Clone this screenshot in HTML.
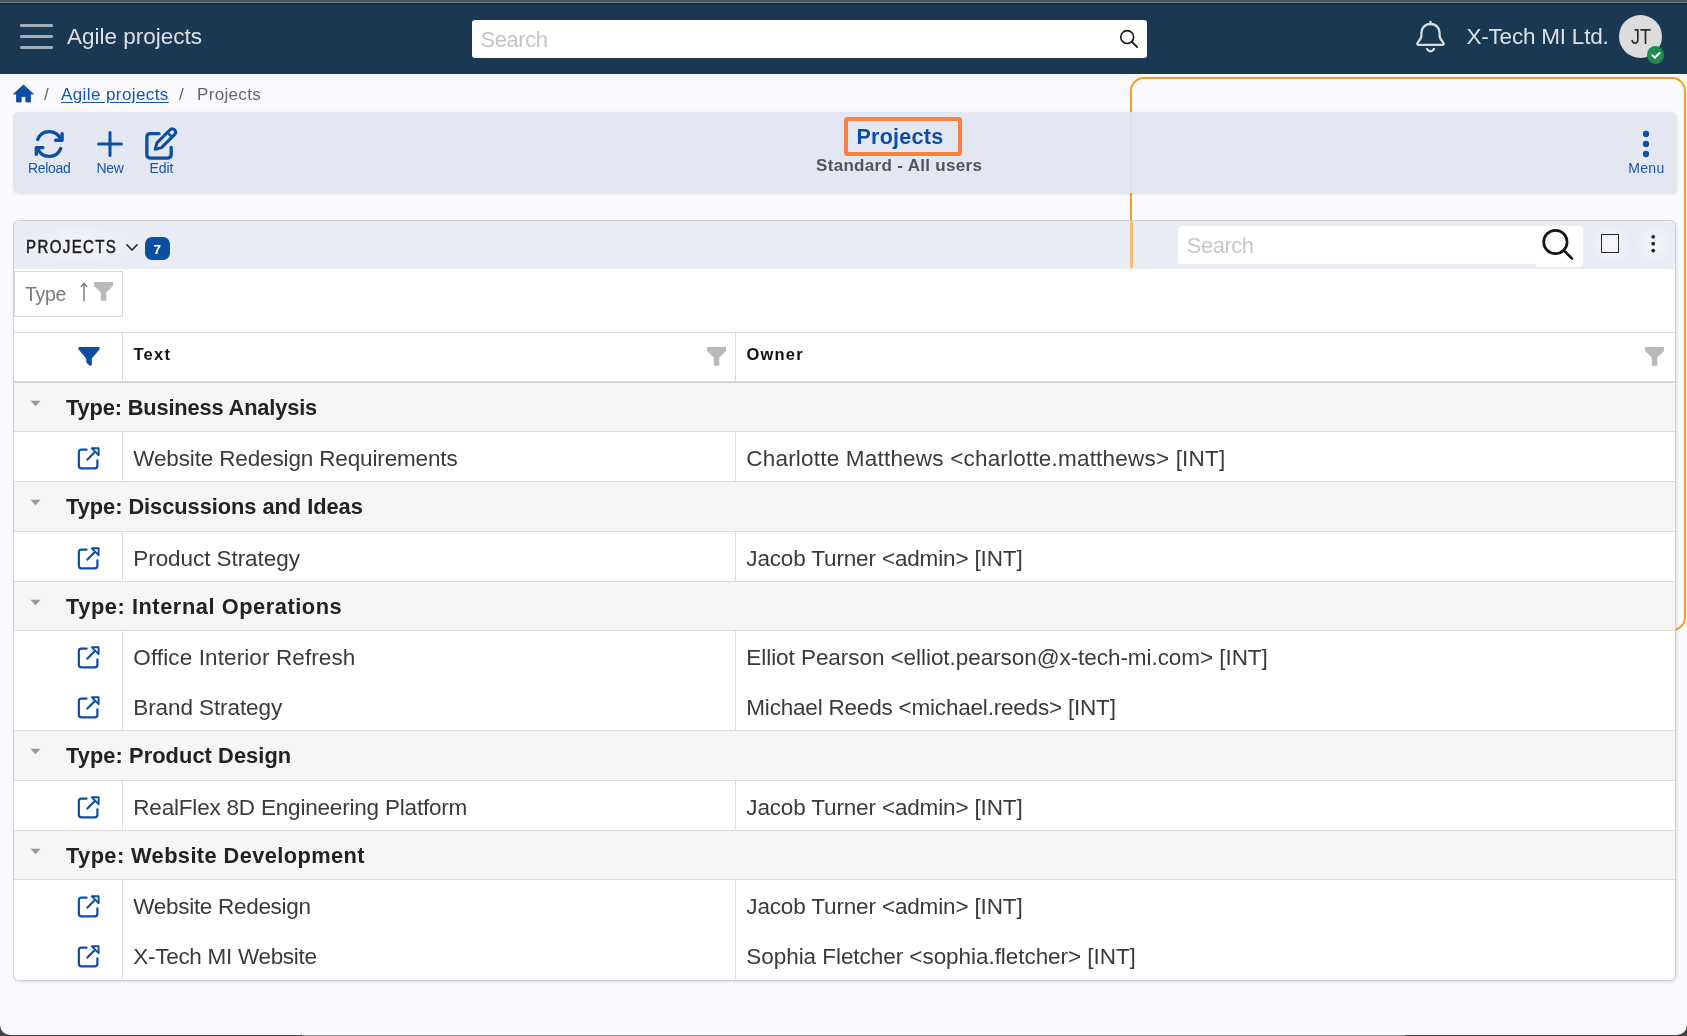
<!DOCTYPE html><html><head><meta charset="utf-8"><style>
html,body{margin:0;padding:0;width:1687px;height:1036px;overflow:hidden;background:#444;}
#w{position:absolute;left:0;top:0;width:1687px;height:1036px;will-change:transform;}
.t{position:absolute;white-space:nowrap;line-height:1;font-family:"Liberation Sans",sans-serif;}
.r{position:absolute;display:block;}
</style></head><body><div id="w">
<div class="r" style="left:0px;top:0px;width:1687px;height:1036px;background:#444;"></div>
<div class="r" style="left:0px;top:0px;width:1687px;height:1036px;background:#f9f9fe;border-radius:0 0 10px 10px;clip-path:inset(0 0 1px 0 round 0 0 10px 10px);"></div>
<div class="r" style="left:0px;top:0px;width:1687px;height:2px;background:#455661;"></div>
<div class="r" style="left:0px;top:2px;width:1687px;height:1px;background:#6f7e86;"></div>
<div class="r" style="left:302px;top:1035px;width:1103px;height:1px;background:#8c8c8c;"></div>
<div class="r" style="left:10px;top:1034px;width:1667px;height:1px;background:#ffffff;"></div>
<div class="r" style="left:0px;top:3px;width:1687px;height:71px;background:#1a3852;"></div>
<div class="r" style="left:0px;top:3px;width:1687px;height:1.5px;background:#16324b;"></div>
<div class="r" style="left:0px;top:74px;width:1687px;height:1px;background:#ffffff;"></div>
<div class="r" style="left:20px;top:24px;width:33px;height:2.6px;background:#a3adb7;border-radius:1.3px;"></div>
<div class="r" style="left:20px;top:35px;width:33px;height:2.6px;background:#a3adb7;border-radius:1.3px;"></div>
<div class="r" style="left:20px;top:46px;width:33px;height:2.6px;background:#a3adb7;border-radius:1.3px;"></div>
<div class="t" style="left:67px;top:26px;font-size:22.5px;color:#dce0e4;font-weight:normal;letter-spacing:0.0px;">Agile projects</div>
<div class="r" style="left:472px;top:20px;width:675px;height:38px;background:#fff;border-radius:3px;"></div>
<div class="t" style="left:480.4px;top:29px;font-size:22px;color:#c4c4c4;font-weight:normal;letter-spacing:-0.42px;">Search</div>
<svg class="r" style="left:1116px;top:27px" width="26" height="24" viewBox="0 0 26 24"><circle cx="11.2" cy="10.06" r="6.45" fill="none" stroke="#111" stroke-width="1.6"/><line x1="15.8" y1="14.6" x2="21.2" y2="20.2" stroke="#111" stroke-width="1.7" stroke-linecap="round"/></svg>
<svg class="r" style="left:1414px;top:18px" width="34" height="36" viewBox="0 0 34 36"><g fill="none" stroke="#d8dcdf" stroke-width="2.3" stroke-linecap="round" stroke-linejoin="round"><path d="M16.5 6 C11 6 7.4 10 7.4 15 L7.4 17.5 C7.4 20.5 6 22 4 24.3 C2.5 26 3.3 26.9 5 26.9 L28 26.9 C29.7 26.9 30.5 26 29 24.3 C27 22 25.6 20.5 25.6 17.5 L25.6 15 C25.6 10 22 6 16.5 6 Z"/><line x1="16.5" y1="3.8" x2="16.5" y2="6"/><path d="M13 31 Q16.5 35.6 20 31"/></g></svg>
<div class="t" style="left:1466.5px;top:26px;font-size:22.5px;color:#dce0e4;font-weight:normal;letter-spacing:-0.215px;">X-Tech MI Ltd.</div>
<div class="r" style="left:1619px;top:15px;width:43px;height:43px;background:#dcdcdc;border-radius:50%;"></div>
<div class="t" style="left:1630.5px;top:26px;font-size:22.5px;color:#2a2a2a;font-weight:normal;letter-spacing:0px;transform:scaleX(0.8);transform-origin:0 0;">JT</div>
<div class="r" style="left:1646.5px;top:46.2px;width:17.6px;height:17.6px;background:#1f8a50;border-radius:50%;"></div>
<svg class="r" style="left:1646.5px;top:46.2px" width="18" height="18" viewBox="0 0 18 18"><path d="M5.4 9.3 L7.9 11.7 L12.5 7" fill="none" stroke="#fff" stroke-width="2" stroke-linecap="round" stroke-linejoin="round"/></svg>
<svg class="r" style="left:13px;top:84px" width="21" height="19" viewBox="0 0 21 19"><path d="M10.5 1 L20.5 10 L17.5 10 L17.5 18 L12.8 18 L12.8 12.5 L8.2 12.5 L8.2 18 L3.5 18 L3.5 10 L0.5 10 Z" fill="#0b4ea6" stroke="#0b4ea6" stroke-width="0.8" stroke-linejoin="round"/></svg>
<div class="t" style="left:44px;top:86px;font-size:17px;color:#666;font-weight:normal;letter-spacing:0px;">/</div>
<div class="t" style="left:61px;top:86px;font-size:17px;color:#1454b4;font-weight:normal;letter-spacing:0.408px;text-decoration:underline;text-underline-offset:2px;">Agile projects</div>
<div class="t" style="left:179px;top:86px;font-size:17px;color:#666;font-weight:normal;letter-spacing:0px;">/</div>
<div class="t" style="left:197px;top:86px;font-size:17px;color:#666;font-weight:normal;letter-spacing:0.329px;">Projects</div>
<div class="r" style="left:1129.5px;top:77px;width:556px;height:553.5px;border:2.8px solid #f4a020;border-radius:14px;box-sizing:border-box;"></div>
<div class="r" style="left:13px;top:112px;width:1663px;height:81px;background:rgba(225,230,240,0.95);border-radius:5px;box-shadow:1px 1px 3px rgba(0,0,0,0.12);"></div>
<div class="r" style="left:13px;top:220px;width:1663px;height:761px;background:#fff;border:1.5px solid #cfcfd4;border-radius:6px;box-sizing:border-box;box-shadow:1px 1px 3px rgba(0,0,0,0.12);"></div>
<div class="r" style="left:14px;top:221px;width:1661px;height:47.5px;background:#e9ecf5;border-radius:5px 5px 0 0;"></div>
<svg class="r" style="left:31px;top:127px" width="36" height="33" viewBox="0 0 36 33"><g fill="none" stroke="#0b4ea6" stroke-width="3.4" stroke-linecap="round" stroke-linejoin="round"><path d="M6.7 12.4 A12.4 12.4 0 0 1 29.6 12.2"/><path d="M24.6 13.3 L31.1 13.3 L31.1 6.6"/><path d="M29.7 21.6 A12.4 12.4 0 0 1 6.8 21.8"/><path d="M11.8 20.6 L5.3 20.6 L5.3 27.3"/></g></svg>
<div class="t" style="left:28px;top:161px;font-size:14px;color:#1a55ad;font-weight:normal;letter-spacing:-0.32px;">Reload</div>
<svg class="r" style="left:94px;top:129px" width="32" height="30" viewBox="0 0 32 30"><g stroke="#0b4ea6" stroke-width="3" stroke-linecap="round"><line x1="16" y1="3.6" x2="16" y2="26.4"/><line x1="4.6" y1="15" x2="27.4" y2="15"/></g></svg>
<div class="t" style="left:96.6px;top:161px;font-size:14px;color:#1a55ad;font-weight:normal;letter-spacing:-0.4px;">New</div>
<svg class="r" style="left:143px;top:126px" width="36" height="36" viewBox="0 0 36 36"><g fill="none" stroke="#0b4ea6" stroke-width="3.3" stroke-linecap="round" stroke-linejoin="round"><path d="M16 7.55 L7.3 7.55 Q3.85 7.55 3.85 11 L3.85 28.6 Q3.85 32.05 7.3 32.05 L24.7 32.05 Q28.15 32.05 28.15 28.6 L28.15 21.5"/><path d="M12.2 23.3 L13.91 16.93 L27.07 3.77 A3.3 3.3 0 0 1 31.73 8.43 L18.57 21.59 Z" stroke-width="3"/><path d="M24.38 6.46 L29.04 11.12" stroke-width="2.6"/></g></svg>
<div class="t" style="left:149.5px;top:161px;font-size:14px;color:#1a55ad;font-weight:normal;letter-spacing:-0.1px;">Edit</div>
<div class="t" style="left:856.5px;top:127px;font-size:21.5px;color:#0d4ca8;font-weight:bold;letter-spacing:0.257px;">Projects</div>
<div class="t" style="left:816px;top:157px;font-size:17px;color:#50555c;font-weight:bold;letter-spacing:0.316px;">Standard - All users</div>
<div class="r" style="left:844px;top:117px;width:118px;height:38.5px;border:4.4px solid #ff7f3f;border-radius:3px;box-sizing:border-box;"></div>
<svg class="r" style="left:1636px;top:126px" width="20" height="34" viewBox="0 0 20 34"><g fill="#0b4ea6"><circle cx="10" cy="8" r="3.15"/><circle cx="10" cy="18" r="3.15"/><circle cx="10" cy="28" r="3.15"/></g></svg>
<div class="t" style="left:1628.2px;top:161px;font-size:14px;color:#1a55ad;font-weight:normal;letter-spacing:0.367px;">Menu</div>
<div class="r" style="left:1129.5px;top:221px;width:3px;height:47px;background:rgba(244,160,32,0.62);"></div>
<div class="r" style="left:14px;top:224px;width:130px;height:44px;background:radial-gradient(closest-side, rgba(255,255,255,0.45), rgba(255,255,255,0));"></div>
<div class="r" style="left:1588px;top:224px;width:44px;height:42px;background:radial-gradient(closest-side, rgba(255,255,255,0.6), rgba(255,255,255,0));"></div>
<div class="r" style="left:1634px;top:224px;width:40px;height:42px;background:radial-gradient(closest-side, rgba(255,255,255,0.5), rgba(255,255,255,0));"></div>
<div class="t" style="left:26.4px;top:239px;font-size:17.5px;color:#1e1e1e;font-weight:normal;letter-spacing:1.6px;transform:scaleX(0.86);transform-origin:0 0;-webkit-text-stroke:0.5px #1e1e1e;">PROJECTS</div>
<svg class="r" style="left:125px;top:243px" width="14" height="9" viewBox="0 0 14 9"><path d="M1.8 1.8 L7 7 L12.2 1.8" fill="none" stroke="#222" stroke-width="1.6" stroke-linecap="round" stroke-linejoin="round"/></svg>
<div class="r" style="left:145px;top:237px;width:25px;height:23px;background:#0b4ea2;border-radius:7px;"></div>
<div class="t" style="left:153.6px;top:243px;font-size:13.5px;color:#fff;font-weight:bold;letter-spacing:0px;">7</div>
<div class="r" style="left:1178px;top:226px;width:405px;height:38px;background:#fff;border-radius:4px;"></div>
<div class="r" style="left:1535px;top:230px;width:48px;height:36.5px;background:#fff;border-radius:0 0 4px 4px;"></div>
<div class="t" style="left:1186.7px;top:235px;font-size:22px;color:#c8c8c8;font-weight:normal;letter-spacing:-0.46px;">Search</div>
<svg class="r" style="left:1538px;top:226px" width="40" height="38" viewBox="0 0 40 38"><circle cx="17.4" cy="16" r="11.7" fill="none" stroke="#151515" stroke-width="2.7"/><line x1="25.8" y1="24.4" x2="34" y2="32.6" stroke="#151515" stroke-width="2.7" stroke-linecap="round"/></svg>
<div class="r" style="left:1600.5px;top:234.3px;width:18.8px;height:18.6px;border:1.8px solid #2a2a2a;box-sizing:border-box;"></div>
<svg class="r" style="left:1645px;top:230px" width="16" height="26" viewBox="0 0 16 26"><g fill="#1e1e1e"><circle cx="8.2" cy="6.8" r="1.85"/><circle cx="8.2" cy="13.7" r="1.85"/><circle cx="8.2" cy="20.6" r="1.85"/></g></svg>
<div class="r" style="left:14px;top:271px;width:109px;height:46px;background:#fff;border:1px solid #d9d9d9;box-sizing:border-box;"></div>
<div class="t" style="left:25px;top:285px;font-size:19.5px;color:#7a7a7a;font-weight:normal;letter-spacing:-0.333px;">Type</div>
<svg class="r" style="left:79px;top:281px" width="10" height="22" viewBox="0 0 10 22"><g stroke="#777" stroke-width="1.4" fill="none" stroke-linecap="round"><line x1="5" y1="2.5" x2="5" y2="20"/><path d="M2.3 5.5 L5 2.3 L7.7 5.5"/></g></svg>
<svg class="r" style="left:93px;top:281px" width="21" height="21" viewBox="0 0 21 21"><path d="M1 1 L20 1 L20 5.1 L13.3 11.5 L13.3 19.8 L7.8 19.8 L7.8 11.5 L1 5.1 Z" fill="#b9b9b9"/></svg>
<div class="r" style="left:14px;top:332px;width:1661px;height:1px;background:#dedede;"></div>
<div class="r" style="left:14px;top:381px;width:1661px;height:2px;background:#d6d6d6;"></div>
<div class="r" style="left:121.5px;top:333px;width:1px;height:48px;background:#dedede;"></div>
<div class="r" style="left:735px;top:333px;width:1px;height:48px;background:#dedede;"></div>
<svg class="r" style="left:77px;top:346px" width="24" height="21" viewBox="0 0 24 21"><path d="M2.8 1 L21.2 1 Q23.6 1.2 22.4 3.4 L14.8 12.4 L14.8 18.6 Q14.6 20.6 12.6 19.4 L10.2 17.4 Q9.2 16.6 9.2 15.5 L9.2 12.4 L1.6 3.4 Q0.4 1.2 2.8 1 Z" fill="#0b4ea6"/></svg>
<div class="t" style="left:133.5px;top:346px;font-size:16.5px;color:#111;font-weight:bold;letter-spacing:1.267px;">Text</div>
<svg class="r" style="left:706px;top:346px" width="21" height="21" viewBox="0 0 21 21"><path d="M1 1 L20 1 L20 5.1 L13.3 11.5 L13.3 19.8 L7.8 19.8 L7.8 11.5 L1 5.1 Z" fill="#b9b9b9"/></svg>
<div class="t" style="left:746.4px;top:346px;font-size:16.5px;color:#111;font-weight:bold;letter-spacing:1.225px;">Owner</div>
<svg class="r" style="left:1644px;top:346px" width="21" height="21" viewBox="0 0 21 21"><path d="M1 1 L20 1 L20 5.1 L13.3 11.5 L13.3 19.8 L7.8 19.8 L7.8 11.5 L1 5.1 Z" fill="#b9b9b9"/></svg>
<div class="r" style="left:14px;top:383px;width:1661px;height:48px;background:#f5f5f5;"></div>
<svg class="r" style="left:29px;top:400px" width="13" height="7" viewBox="0 0 13 7"><path d="M1.4 0.8 L11.6 0.8 L6.5 6.2 Z" fill="#9a9a9a"/></svg>
<div class="t" style="left:66px;top:397px;font-size:21.8px;color:#222;font-weight:bold;letter-spacing:-0.145px;">Type: Business Analysis</div>
<div class="r" style="left:14px;top:431px;width:1661px;height:1px;background:#dcdcdc;"></div>
<div class="r" style="left:121.5px;top:432px;width:1px;height:49px;background:#dedede;"></div>
<div class="r" style="left:735px;top:432px;width:1px;height:49px;background:#dedede;"></div>
<svg class="r" style="left:76.2px;top:446.1px" width="24" height="25" viewBox="0 0 24 25"><g fill="none" stroke="#0b4ea6" stroke-width="2.2" stroke-linecap="round" stroke-linejoin="round"><path d="M10.6 3.6 L5.4 3.6 Q2.86 3.6 2.86 6.1 L2.86 19.8 Q2.86 22.3 5.4 22.3 L18.9 22.3 Q21.4 22.3 21.4 19.8 L21.4 14.3"/><path d="M11.4 13.6 L18.6 6.3"/><path d="M15.9 2.3 L22.6 2.3 L22.6 9.2 Z" stroke-width="1.9"/></g></svg>
<div class="t" style="left:133.3px;top:448px;font-size:22.5px;color:#3a3a3a;font-weight:normal;letter-spacing:-0.146px;">Website Redesign Requirements</div>
<div class="t" style="left:746.3px;top:448px;font-size:22.5px;color:#3a3a3a;font-weight:normal;letter-spacing:0.198px;">Charlotte Matthews &lt;charlotte.matthews&gt; [INT]</div>
<div class="r" style="left:14px;top:481px;width:1661px;height:1px;background:#dcdcdc;"></div>
<div class="r" style="left:14px;top:482px;width:1661px;height:49px;background:#f5f5f5;"></div>
<svg class="r" style="left:29px;top:499px" width="13" height="7" viewBox="0 0 13 7"><path d="M1.4 0.8 L11.6 0.8 L6.5 6.2 Z" fill="#9a9a9a"/></svg>
<div class="t" style="left:66px;top:496px;font-size:21.8px;color:#222;font-weight:bold;letter-spacing:-0.031px;">Type: Discussions and Ideas</div>
<div class="r" style="left:14px;top:531px;width:1661px;height:1px;background:#dcdcdc;"></div>
<div class="r" style="left:121.5px;top:532px;width:1px;height:49px;background:#dedede;"></div>
<div class="r" style="left:735px;top:532px;width:1px;height:49px;background:#dedede;"></div>
<svg class="r" style="left:76.2px;top:546.1px" width="24" height="25" viewBox="0 0 24 25"><g fill="none" stroke="#0b4ea6" stroke-width="2.2" stroke-linecap="round" stroke-linejoin="round"><path d="M10.6 3.6 L5.4 3.6 Q2.86 3.6 2.86 6.1 L2.86 19.8 Q2.86 22.3 5.4 22.3 L18.9 22.3 Q21.4 22.3 21.4 19.8 L21.4 14.3"/><path d="M11.4 13.6 L18.6 6.3"/><path d="M15.9 2.3 L22.6 2.3 L22.6 9.2 Z" stroke-width="1.9"/></g></svg>
<div class="t" style="left:133.3px;top:548px;font-size:22.5px;color:#3a3a3a;font-weight:normal;letter-spacing:-0.067px;">Product Strategy</div>
<div class="t" style="left:746.3px;top:548px;font-size:22.5px;color:#3a3a3a;font-weight:normal;letter-spacing:-0.152px;">Jacob Turner &lt;admin&gt; [INT]</div>
<div class="r" style="left:14px;top:581px;width:1661px;height:1px;background:#dcdcdc;"></div>
<div class="r" style="left:14px;top:582px;width:1661px;height:48px;background:#f5f5f5;"></div>
<svg class="r" style="left:29px;top:599px" width="13" height="7" viewBox="0 0 13 7"><path d="M1.4 0.8 L11.6 0.8 L6.5 6.2 Z" fill="#9a9a9a"/></svg>
<div class="t" style="left:66px;top:596px;font-size:21.8px;color:#222;font-weight:bold;letter-spacing:0.554px;">Type: Internal Operations</div>
<div class="r" style="left:14px;top:630px;width:1661px;height:1px;background:#dcdcdc;"></div>
<div class="r" style="left:121.5px;top:631px;width:1px;height:50px;background:#dedede;"></div>
<div class="r" style="left:735px;top:631px;width:1px;height:50px;background:#dedede;"></div>
<svg class="r" style="left:76.2px;top:645.1px" width="24" height="25" viewBox="0 0 24 25"><g fill="none" stroke="#0b4ea6" stroke-width="2.2" stroke-linecap="round" stroke-linejoin="round"><path d="M10.6 3.6 L5.4 3.6 Q2.86 3.6 2.86 6.1 L2.86 19.8 Q2.86 22.3 5.4 22.3 L18.9 22.3 Q21.4 22.3 21.4 19.8 L21.4 14.3"/><path d="M11.4 13.6 L18.6 6.3"/><path d="M15.9 2.3 L22.6 2.3 L22.6 9.2 Z" stroke-width="1.9"/></g></svg>
<div class="t" style="left:133.3px;top:647px;font-size:22.5px;color:#3a3a3a;font-weight:normal;letter-spacing:0.109px;">Office Interior Refresh</div>
<div class="t" style="left:746.3px;top:647px;font-size:22.5px;color:#3a3a3a;font-weight:normal;letter-spacing:-0.056px;">Elliot Pearson &lt;elliot.pearson@x-tech-mi.com&gt; [INT]</div>
<div class="r" style="left:121.5px;top:681px;width:1px;height:49px;background:#dedede;"></div>
<div class="r" style="left:735px;top:681px;width:1px;height:49px;background:#dedede;"></div>
<svg class="r" style="left:76.2px;top:695.1px" width="24" height="25" viewBox="0 0 24 25"><g fill="none" stroke="#0b4ea6" stroke-width="2.2" stroke-linecap="round" stroke-linejoin="round"><path d="M10.6 3.6 L5.4 3.6 Q2.86 3.6 2.86 6.1 L2.86 19.8 Q2.86 22.3 5.4 22.3 L18.9 22.3 Q21.4 22.3 21.4 19.8 L21.4 14.3"/><path d="M11.4 13.6 L18.6 6.3"/><path d="M15.9 2.3 L22.6 2.3 L22.6 9.2 Z" stroke-width="1.9"/></g></svg>
<div class="t" style="left:133.3px;top:697px;font-size:22.5px;color:#3a3a3a;font-weight:normal;letter-spacing:-0.092px;">Brand Strategy</div>
<div class="t" style="left:746.3px;top:697px;font-size:22.5px;color:#3a3a3a;font-weight:normal;letter-spacing:-0.2px;">Michael Reeds &lt;michael.reeds&gt; [INT]</div>
<div class="r" style="left:14px;top:730px;width:1661px;height:1px;background:#dcdcdc;"></div>
<div class="r" style="left:14px;top:731px;width:1661px;height:49px;background:#f5f5f5;"></div>
<svg class="r" style="left:29px;top:748px" width="13" height="7" viewBox="0 0 13 7"><path d="M1.4 0.8 L11.6 0.8 L6.5 6.2 Z" fill="#9a9a9a"/></svg>
<div class="t" style="left:66px;top:745px;font-size:21.8px;color:#222;font-weight:bold;letter-spacing:0.079px;">Type: Product Design</div>
<div class="r" style="left:14px;top:780px;width:1661px;height:1px;background:#dcdcdc;"></div>
<div class="r" style="left:121.5px;top:781px;width:1px;height:49px;background:#dedede;"></div>
<div class="r" style="left:735px;top:781px;width:1px;height:49px;background:#dedede;"></div>
<svg class="r" style="left:76.2px;top:795.1px" width="24" height="25" viewBox="0 0 24 25"><g fill="none" stroke="#0b4ea6" stroke-width="2.2" stroke-linecap="round" stroke-linejoin="round"><path d="M10.6 3.6 L5.4 3.6 Q2.86 3.6 2.86 6.1 L2.86 19.8 Q2.86 22.3 5.4 22.3 L18.9 22.3 Q21.4 22.3 21.4 19.8 L21.4 14.3"/><path d="M11.4 13.6 L18.6 6.3"/><path d="M15.9 2.3 L22.6 2.3 L22.6 9.2 Z" stroke-width="1.9"/></g></svg>
<div class="t" style="left:133.3px;top:797px;font-size:22.5px;color:#3a3a3a;font-weight:normal;letter-spacing:-0.197px;">RealFlex 8D Engineering Platform</div>
<div class="t" style="left:746.3px;top:797px;font-size:22.5px;color:#3a3a3a;font-weight:normal;letter-spacing:-0.152px;">Jacob Turner &lt;admin&gt; [INT]</div>
<div class="r" style="left:14px;top:830px;width:1661px;height:1px;background:#dcdcdc;"></div>
<div class="r" style="left:14px;top:831px;width:1661px;height:48px;background:#f5f5f5;"></div>
<svg class="r" style="left:29px;top:848px" width="13" height="7" viewBox="0 0 13 7"><path d="M1.4 0.8 L11.6 0.8 L6.5 6.2 Z" fill="#9a9a9a"/></svg>
<div class="t" style="left:66px;top:845px;font-size:21.8px;color:#222;font-weight:bold;letter-spacing:0.408px;">Type: Website Development</div>
<div class="r" style="left:14px;top:879px;width:1661px;height:1px;background:#dcdcdc;"></div>
<div class="r" style="left:121.5px;top:880px;width:1px;height:50px;background:#dedede;"></div>
<div class="r" style="left:735px;top:880px;width:1px;height:50px;background:#dedede;"></div>
<svg class="r" style="left:76.2px;top:894.1px" width="24" height="25" viewBox="0 0 24 25"><g fill="none" stroke="#0b4ea6" stroke-width="2.2" stroke-linecap="round" stroke-linejoin="round"><path d="M10.6 3.6 L5.4 3.6 Q2.86 3.6 2.86 6.1 L2.86 19.8 Q2.86 22.3 5.4 22.3 L18.9 22.3 Q21.4 22.3 21.4 19.8 L21.4 14.3"/><path d="M11.4 13.6 L18.6 6.3"/><path d="M15.9 2.3 L22.6 2.3 L22.6 9.2 Z" stroke-width="1.9"/></g></svg>
<div class="t" style="left:133.3px;top:896px;font-size:22.5px;color:#3a3a3a;font-weight:normal;letter-spacing:-0.3px;">Website Redesign</div>
<div class="t" style="left:746.3px;top:896px;font-size:22.5px;color:#3a3a3a;font-weight:normal;letter-spacing:-0.152px;">Jacob Turner &lt;admin&gt; [INT]</div>
<div class="r" style="left:121.5px;top:930px;width:1px;height:49px;background:#dedede;"></div>
<div class="r" style="left:735px;top:930px;width:1px;height:49px;background:#dedede;"></div>
<svg class="r" style="left:76.2px;top:944.1px" width="24" height="25" viewBox="0 0 24 25"><g fill="none" stroke="#0b4ea6" stroke-width="2.2" stroke-linecap="round" stroke-linejoin="round"><path d="M10.6 3.6 L5.4 3.6 Q2.86 3.6 2.86 6.1 L2.86 19.8 Q2.86 22.3 5.4 22.3 L18.9 22.3 Q21.4 22.3 21.4 19.8 L21.4 14.3"/><path d="M11.4 13.6 L18.6 6.3"/><path d="M15.9 2.3 L22.6 2.3 L22.6 9.2 Z" stroke-width="1.9"/></g></svg>
<div class="t" style="left:133.3px;top:946px;font-size:22.5px;color:#3a3a3a;font-weight:normal;letter-spacing:-0.294px;">X-Tech MI Website</div>
<div class="t" style="left:746.3px;top:946px;font-size:22.5px;color:#3a3a3a;font-weight:normal;letter-spacing:-0.05px;">Sophia Fletcher &lt;sophia.fletcher&gt; [INT]</div>
</div></body></html>
